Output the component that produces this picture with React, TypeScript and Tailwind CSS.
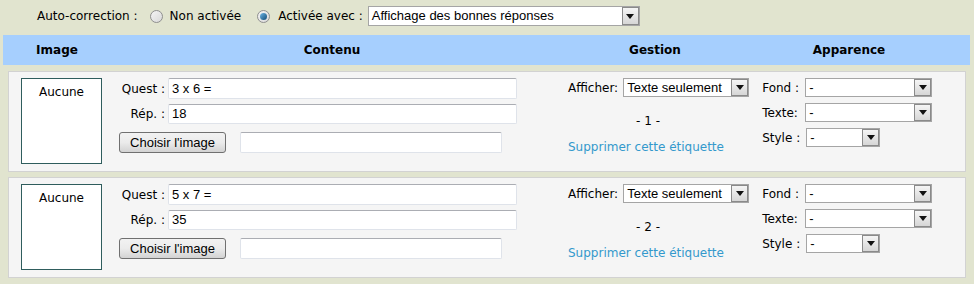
import React from 'react';

const label = "font-['DejaVu_Sans',Verdana,sans-serif] text-[12px] text-black";
const field = "font-['Liberation_Sans',Arial,sans-serif] text-[13px] text-black";

function Arrow() {
  return (
    <div className="flex h-full w-[17px] shrink-0 items-center justify-center border border-[#8a8a8a] bg-linear-to-b from-[#f5f5f5] to-[#d6d6d6]">
      <svg width="8" height="5" viewBox="0 0 8 5">
        <path d="M0 0H8L4 5Z" fill="#111" />
      </svg>
    </div>
  );
}

function Select({ value, className }: { value: string; className: string }) {
  return (
    <div className={`flex h-[19px] items-stretch border border-[#a5a5a5] bg-white ${className}`}>
      <div className={`flex flex-1 items-center overflow-hidden whitespace-nowrap pl-[3px] ${field}`}>{value}</div>
      <Arrow />
    </div>
  );
}

function Radio({ checked }: { checked?: boolean }) {
  return (
    <span className="flex h-[13px] w-[13px] items-center justify-center rounded-full border border-[#8f8f8f] bg-linear-to-br from-[#f4f4f4] to-[#d9d9d9]">
      {checked && <span className="h-[7px] w-[7px] rounded-full bg-linear-to-br from-[#6fb7e6] to-[#0f4c78]" />}
    </span>
  );
}

function Input({ value, className }: { value?: string; className: string }) {
  return (
    <div
      className={`flex items-center rounded-[2px] border border-[#dfe3ea] border-t-[#abadb3] bg-white pl-[3px] ${field} ${className}`}
    >
      {value}
    </div>
  );
}

function Card({ n, quest, rep }: { n: number; quest: string; rep: string }) {
  return (
    <div className="ml-[8px] flex h-[101px] w-[958px] border border-[#d2d2d2] bg-[#f5f5f5] pt-[6px]">
      <div className={`ml-[12px] h-[86px] w-[81px] border border-[#2f5d5d] bg-white pt-[4px] text-center ${label}`}>
        Aucune
      </div>

      <div className="ml-[17px] flex flex-col">
        <div className="flex items-center">
          <span className={`w-[46px] text-right ${label}`}>Quest :</span>
          <Input value={quest} className="ml-[3px] h-[21px] w-[349px]" />
        </div>
        <div className="mt-[5px] flex items-center">
          <span className={`w-[46px] text-right ${label}`}>Rép. :</span>
          <Input value={rep} className="ml-[3px] h-[20px] w-[349px]" />
        </div>
        <div className="mt-[8px] flex items-center">
          <button
            className={`h-[21px] w-[107px] rounded-[3px] border border-[#707070] bg-linear-to-b from-[#f2f2f2] via-[#ebebeb] to-[#d3d3d3] ${field}`}
          >
            Choisir l'image
          </button>
          <Input className="ml-[14px] h-[21px] w-[262px]" />
        </div>
      </div>

      <div className="ml-[51px] flex flex-col">
        <div className="flex items-center">
          <span className={label}>Afficher:</span>
          <Select value="Texte seulement" className="ml-[5px] w-[126px]" />
        </div>
        <div className={`mt-[15px] w-[160px] text-center ${label}`}>- {n} -</div>
        <div className="mt-[8px] font-['DejaVu_Sans',Verdana,sans-serif] text-[12px] text-[#3399cc]">
          Supprimer cette étiquette
        </div>
      </div>

      <div className="ml-[13px] flex flex-col">
        <div className="flex items-center">
          <span className={`w-[43px] ${label}`}>Fond :</span>
          <Select value="-" className="w-[127px]" />
        </div>
        <div className="mt-[6px] flex items-center">
          <span className={`w-[43px] ${label}`}>Texte:</span>
          <Select value="-" className="w-[127px]" />
        </div>
        <div className="mt-[6px] flex items-center">
          <span className={`w-[44px] ${label}`}>Style :</span>
          <Select value="-" className="w-[74px]" />
        </div>
      </div>
    </div>
  );
}

export default function App() {
  return (
    <div className="h-[284px] w-[974px] overflow-hidden bg-[#e1e4cf]">
      <div className="flex h-[35px] items-center pb-[3px] pl-[37px]">
        <span className={label}>Auto-correction :</span>
        <span className="ml-[12px]">
          <Radio />
        </span>
        <span className={`ml-[7px] ${label}`}>Non activée</span>
        <span className="ml-[16px]">
          <Radio checked />
        </span>
        <span className={`ml-[8px] ${label}`}>Activée avec :</span>
        <Select value="Affichage des bonnes réponses" className="ml-[5px] h-[20px] w-[272px]" />
      </div>

      <div className="ml-[3px] flex h-[30px] w-[967px] items-center bg-[#a6cffe] font-['DejaVu_Sans',Verdana,sans-serif] text-[12px] font-bold text-black">
        <div className="w-[108px] text-center">Image</div>
        <div className="w-[442px] text-center">Contenu</div>
        <div className="w-[204px] text-center">Gestion</div>
        <div className="w-[184px] text-center">Apparence</div>
      </div>

      <div className="mt-[6px] flex flex-col gap-[5px]">
        <Card n={1} quest="3 x 6 =" rep="18" />
        <Card n={2} quest="5 x 7 =" rep="35" />
      </div>
    </div>
  );
}
